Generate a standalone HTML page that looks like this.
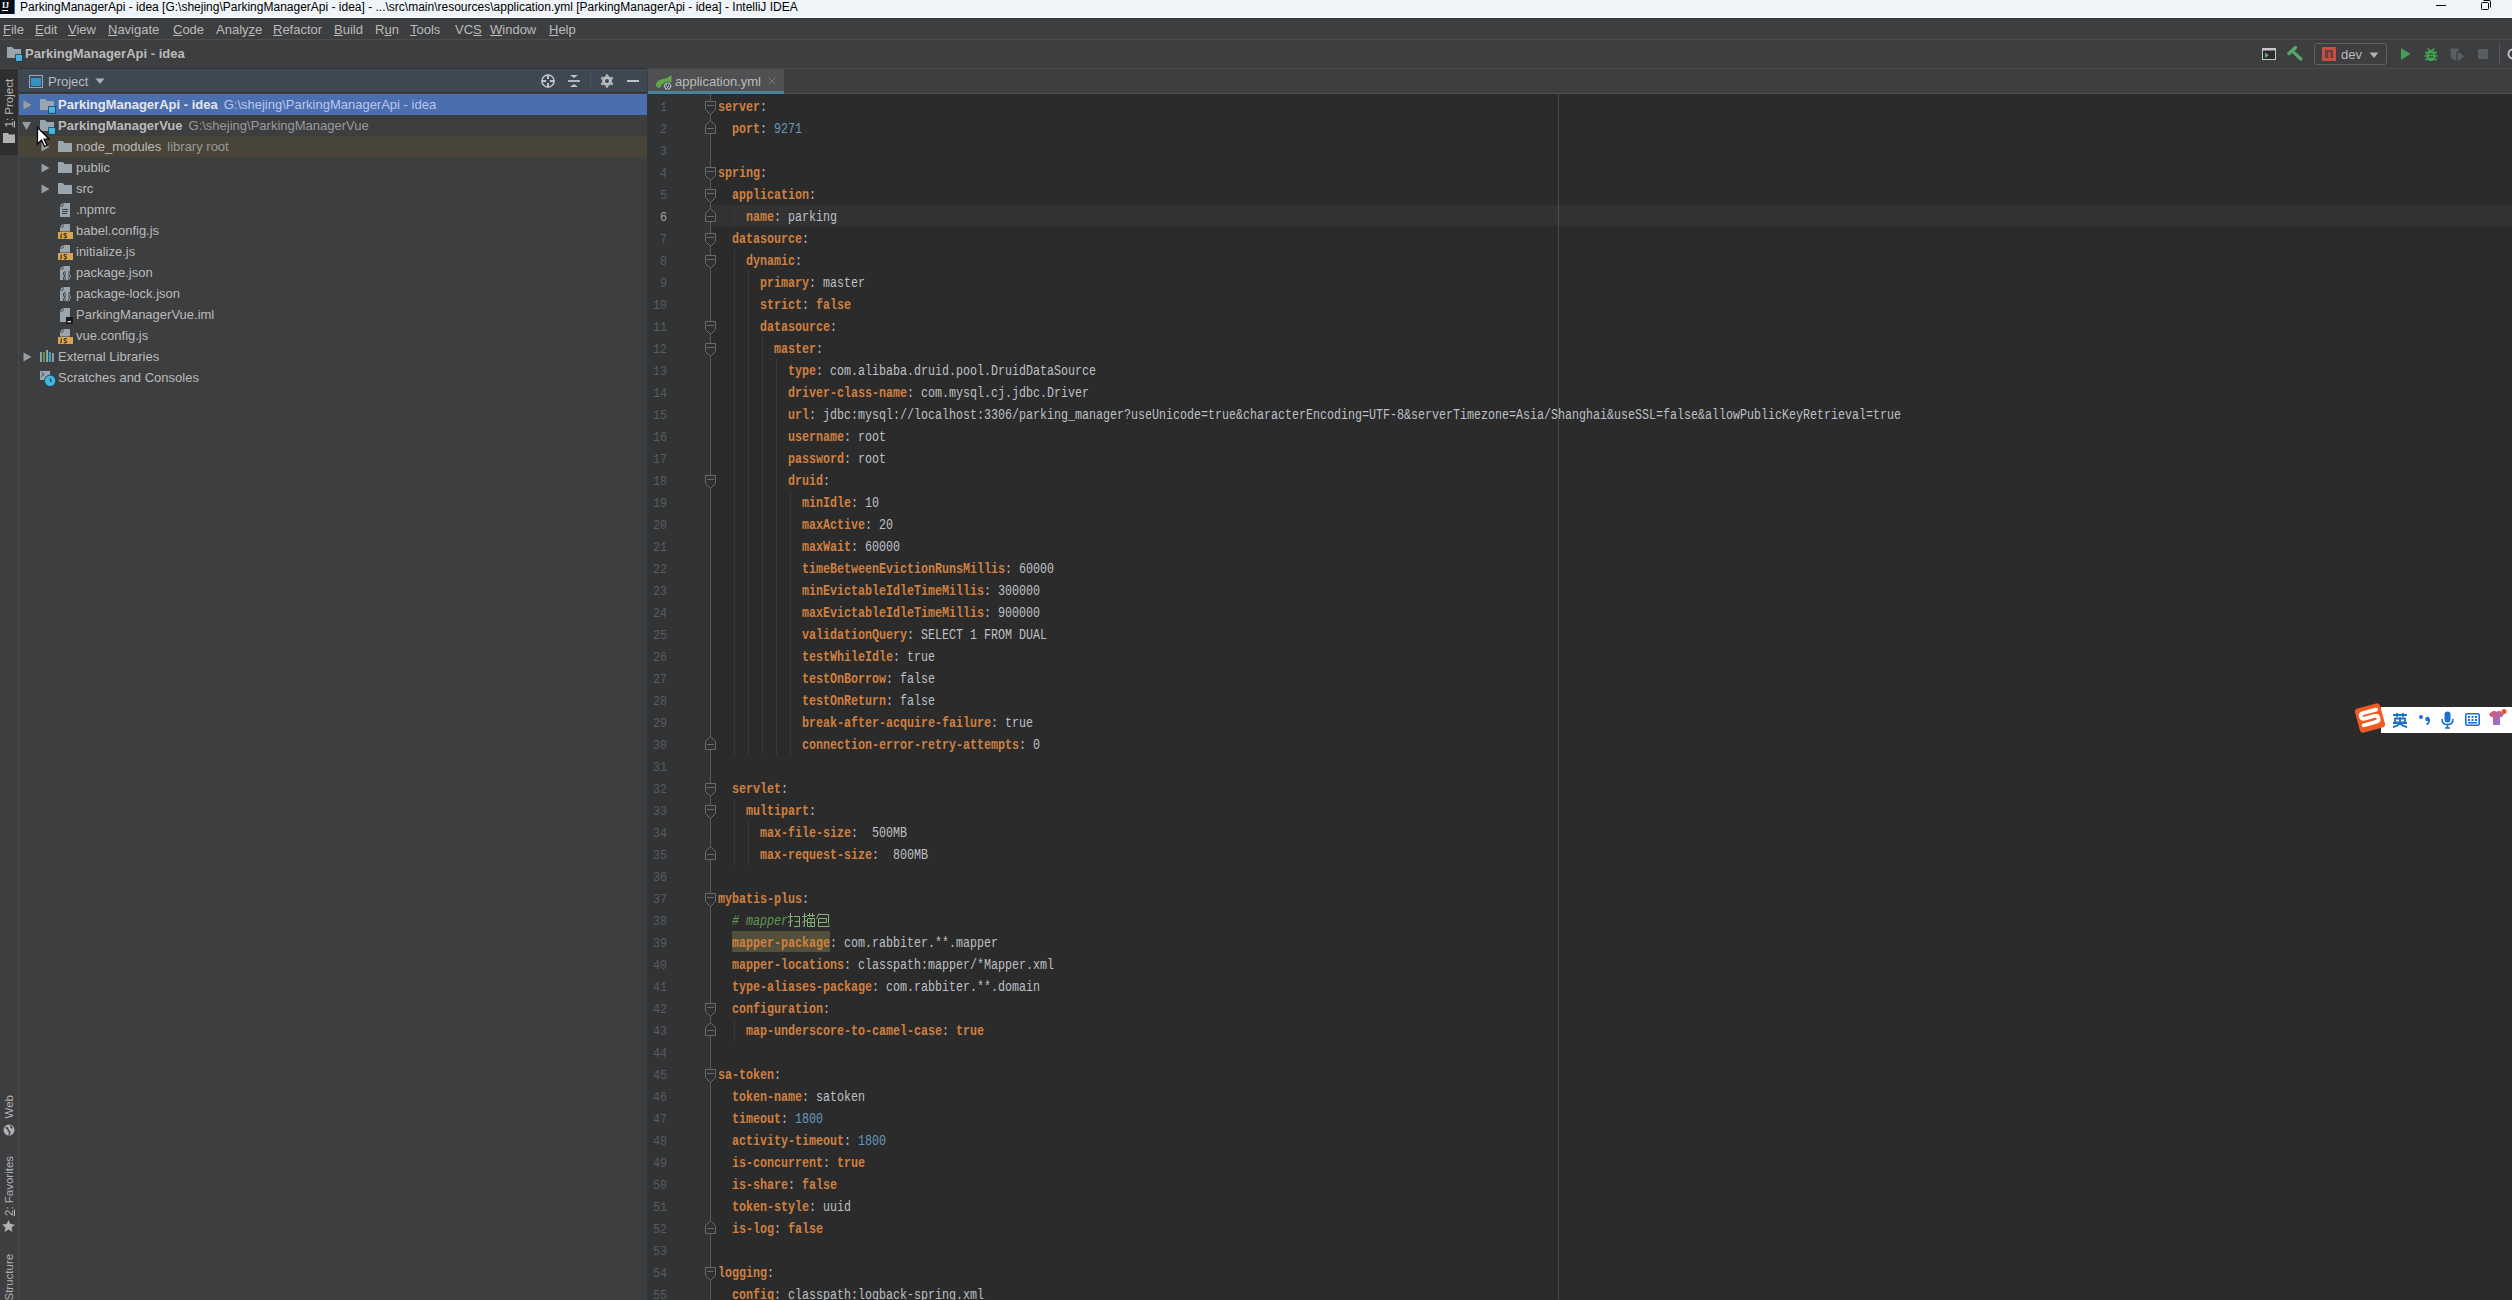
<!DOCTYPE html><html><head><meta charset="utf-8"><title>IntelliJ IDEA</title><style>
*{margin:0;padding:0;box-sizing:border-box}
html,body{width:2512px;height:1300px;overflow:hidden;background:#3d3e40;font-family:"Liberation Sans",sans-serif}
.a{position:absolute}
#title{position:absolute;left:0;top:0;width:2512px;height:18px;background:#eff4f9;border-bottom:1px solid #ffffff}
#title .t{position:absolute;left:20px;top:-1px;line-height:16px;font-size:12px;color:#000}
#menubar{position:absolute;left:0;top:18px;width:2512px;height:22px;background:#3d3e40;border-top:1px solid #313234;border-bottom:1px solid #4b4d4f}
.mi{position:absolute;top:2px;font-size:13px;line-height:17px;color:#bbbbbb}
.mi u{text-decoration:underline;text-underline-offset:1px}
#navbar{position:absolute;left:0;top:40px;width:2512px;height:29px;background:#3d3e40;border-bottom:1px solid #47494b}
#strip{position:absolute;left:0;top:69px;width:18px;height:1231px;background:#3d3e40}
#panel{position:absolute;left:19px;top:69px;width:628px;height:1231px;background:#3d3e40}
#phead{position:absolute;left:19px;top:68px;width:628px;height:25px;background:#3d4853;border-top:1px solid #2f3336;border-bottom:1px solid #2b3138}
.tr{position:absolute;left:19px;width:628px;height:21px}
.tr.sel{background:#4b6eaf}
.tr.lib{background:#484438}
.ar{position:absolute}
.ti{position:absolute;width:18px;height:18px}
.ti svg{display:block}
.tt{position:absolute;font-size:13px;line-height:21px;color:#bbbbbb;white-space:pre}
.tt b{font-weight:bold}
.tt .ex{color:#9a9a9a;margin-left:6px}
.tt.s{color:#e6e6e6}
.tt.s .ex{color:#b9c6ea}
#tabbar{position:absolute;left:647px;top:69px;width:1865px;height:25px;background:#3d3e40;border-bottom:1px solid #515151}
#tab{position:absolute;left:648px;top:69px;width:136px;height:25px;background:#4e5052;border-bottom:3px solid #4c8295}
#editor{position:absolute;left:647px;top:94px;width:1865px;height:1206px;background:#2b2b2b}
#gutter{position:absolute;left:647px;top:94px;width:63px;height:1206px;background:#313335}
.ln{position:absolute;left:627px;width:40px;text-align:right;font-family:"Liberation Mono",monospace;font-size:13px;line-height:22px;color:#595c5f;transform:scaleX(0.897);transform-origin:100% 0}
.cl{position:absolute;font-family:"Liberation Mono",monospace;font-size:14px;line-height:22px;white-space:pre;color:#bcc0c6;transform:scaleX(0.8332);transform-origin:0 0}
.cl .k,.cl .b,.cl .hl{color:#cf8040;font-weight:bold}
.cl .hl{}
#hlbox{position:absolute;left:732px;top:931px;width:98px;height:21px;background:#52503a}
.cl .n{color:#6897bb}
.cl .c{color:#629755;font-style:italic}
.ig{position:absolute;width:1px;background:#393939}
#curline{position:absolute;left:711px;top:205px;width:1801px;height:21px;background:#323232}
#margin{position:absolute;left:1558px;top:94px;width:1px;height:1206px;background:#4b4b4b}
</style></head><body>
<div id="title"><svg class="a" style="left:0;top:0" width="15" height="14" viewBox="0 0 15 14"><rect width="15" height="14" fill="#0a0d14"/><rect x="14" y="0" width="1" height="14" fill="#1b6fb8"/><text x="2" y="8" font-family="Liberation Serif" font-weight="bold" font-size="8" fill="#fff">IJ</text><rect x="2" y="10" width="6" height="1" fill="#fff"/></svg>
<div class="t">ParkingManagerApi - idea [G:\shejing\ParkingManagerApi - idea] - ...\src\main\resources\application.yml [ParkingManagerApi - idea] - IntelliJ IDEA</div>
<div class="a" style="left:2436px;top:5px;width:10px;height:1px;background:#000"></div>
<svg class="a" style="left:2480px;top:-1px" width="12" height="11" viewBox="0 0 12 11"><rect x="1.5" y="3.5" width="7" height="7" rx="1" fill="none" stroke="#000"/><path d="M3.5 1.5H9.5Q10.5 1.5 10.5 2.5V8.5" fill="none" stroke="#000"/></svg>
</div>
<div id="menubar"><div class="mi" style="left:3px"><u>F</u>ile</div>
<div class="mi" style="left:35px"><u>E</u>dit</div>
<div class="mi" style="left:68px"><u>V</u>iew</div>
<div class="mi" style="left:108px"><u>N</u>avigate</div>
<div class="mi" style="left:173px"><u>C</u>ode</div>
<div class="mi" style="left:216px">Analy<u>z</u>e</div>
<div class="mi" style="left:273px"><u>R</u>efactor</div>
<div class="mi" style="left:334px"><u>B</u>uild</div>
<div class="mi" style="left:375px">R<u>u</u>n</div>
<div class="mi" style="left:410px"><u>T</u>ools</div>
<div class="mi" style="left:455px">VC<u>S</u></div>
<div class="mi" style="left:490px"><u>W</u>indow</div>
<div class="mi" style="left:549px"><u>H</u>elp</div></div>
<div id="navbar"></div>
<div class="ti" style="left:7px;top:44px"><svg width="18" height="18" viewBox="0 0 18 18"><path d="M0 3H5L7 5H14V14H0Z" fill="#9aa5ad"/><rect x="8.2" y="10.1" width="7.6" height="7.6" fill="#2a3b45"/><rect x="9" y="10.9" width="6" height="6" fill="#40b6e0"/></svg></div>
<div class="tt" style="left:25px;top:43px;color:#bbbbbb"><b>ParkingManagerApi - idea</b></div>

<svg class="a" style="left:2262px;top:48px" width="14" height="12" viewBox="0 0 14 12"><rect x="0.5" y="0.5" width="13" height="11" fill="#2b2b2b" stroke="#c4c6c8"/><rect x="0" y="0" width="14" height="2.5" fill="#c4c6c8"/><path d="M3 4.5l4 2.8-4 2.8z" fill="#59a869"/></svg>
<svg class="a" style="left:2286px;top:46px" width="17" height="15" viewBox="0 0 17 15"><path d="M3 7.5L9.5 1.5" stroke="#59a869" stroke-width="3.4" stroke-linecap="round"/><path d="M6.2 4.8L14.8 13" stroke="#59a869" stroke-width="3.2" stroke-linecap="round"/></svg>
<div class="a" style="left:2314px;top:43px;width:73px;height:22px;border:1px solid #5e6060;border-radius:3px"></div>
<svg class="a" style="left:2322px;top:47px" width="14" height="14" viewBox="0 0 14 14"><rect width="14" height="14" fill="#c94e3f"/><path d="M3 11V3H11V11H8.5V5.3H6.2V11Z" fill="#3d3e40" fill-opacity=".75"/></svg>
<div class="a" style="left:2341px;top:45px;font-size:13px;line-height:19px;color:#bbbbbb">dev</div>
<svg class="a" style="left:2369px;top:52px" width="10" height="7" viewBox="0 0 10 7"><path d="M0.5 0.5H9.5L5 6Z" fill="#afb1b3"/></svg>
<svg class="a" style="left:2400px;top:47px" width="12" height="14" viewBox="0 0 12 14"><path d="M1 1L10.5 7L1 13Z" fill="#499c54"/></svg>
<svg class="a" style="left:2424px;top:47px" width="14" height="15" viewBox="0 0 14 15"><ellipse cx="7" cy="8.5" rx="4.6" ry="5.8" fill="#499c54"/><path d="M1 5.5h12M0.5 9h13M1 12.5h12M4 1.5l1.5 2M10 1.5l-1.5 2" stroke="#499c54" stroke-width="1.5"/><path d="M4.8 7.2h4.4M4.8 10h4.4" stroke="#1e5c2a" stroke-width="1.3"/></svg>
<svg class="a" style="left:2450px;top:48px" width="15" height="13" viewBox="0 0 15 13"><path d="M0.5 0.5h8v3H6.3v9.5Q0.5 11 0.5 7z" fill="#5a5d60"/><path d="M7.5 4.5h2l4.5 4-4.5 4h-2z" fill="#5a5d60"/></svg>
<div class="a" style="left:2478px;top:49px;width:10px;height:10px;background:#5a5d60"></div>
<div class="a" style="left:2499px;top:44px;width:1px;height:20px;background:#55585a"></div>
<svg class="a" style="left:2506px;top:48px" width="6" height="13" viewBox="0 0 6 13"><circle cx="7" cy="6" r="4.6" fill="none" stroke="#c4c6c8" stroke-width="1.8"/></svg>

<div id="strip"></div>
<div class="a" style="left:0;top:69px;width:18px;height:86px;background:#2d2f31"></div>
<div class="a" style="left:0;top:0;height:14px;font-size:11.5px;line-height:14px;color:#bbbbbb;white-space:nowrap;transform-origin:0 0;transform:translate(2px,127.5px) rotate(-90deg)"><u>1</u>: Project</div>
<svg class="a" style="left:3px;top:133px" width="12" height="10" viewBox="0 0 12 10"><path d="M0 0h5l1 1.5h6V10H0z" fill="#afb1b3"/></svg>
<div class="a" style="left:0;top:0;height:14px;font-size:11.5px;line-height:14px;color:#afb1b3;white-space:nowrap;transform-origin:0 0;transform:translate(2px,1118.5px) rotate(-90deg)">Web</div>
<svg class="a" style="left:3px;top:1124px" width="12" height="12" viewBox="0 0 12 12"><circle cx="6" cy="6" r="5.5" fill="#afb1b3"/><path d="M2.5 3.5q2 0 2.5 2t2 2.5q-.8 1.6-1 3M7.5 1.5q0 2 2 2.5" stroke="#3d3e40" fill="none" stroke-width="1.3"/></svg>
<div class="a" style="left:0;top:0;height:14px;font-size:11.5px;line-height:14px;color:#afb1b3;white-space:nowrap;transform-origin:0 0;transform:translate(2px,1216px) rotate(-90deg)"><u>2</u>: Favorites</div>
<svg class="a" style="left:2px;top:1220px" width="13" height="12" viewBox="0 0 13 12"><path d="M6.5 0l1.9 4 4.6.5-3.5 3 1 4.5-4-2.4-4 2.4 1-4.5L0 4.5 4.6 4z" fill="#afb1b3"/></svg>
<div class="a" style="left:0;top:0;height:14px;font-size:11.5px;line-height:14px;color:#afb1b3;white-space:nowrap;transform-origin:0 0;transform:translate(2px,1300.5px) rotate(-90deg)">Structure</div>
<div class="a" style="left:18px;top:69px;width:1px;height:1231px;background:#47494b"></div>
<div id="panel"></div>
<div id="phead"></div>

<svg class="a" style="left:29px;top:75px" width="14" height="14" viewBox="0 0 14 14"><rect x="0.5" y="0.5" width="13" height="12" fill="none" stroke="#9aa7b0"/><rect x="2" y="3" width="10" height="8" fill="#3592c4"/></svg>
<div class="a" style="left:48px;top:73px;font-size:13px;line-height:18px;color:#bbbbbb">Project</div>
<svg class="a" style="left:95px;top:78px" width="10" height="7" viewBox="0 0 10 7"><path d="M0.5 0.5H9.5L5 6Z" fill="#afb1b3"/></svg>
<svg class="a" style="left:540px;top:73px" width="16" height="16" viewBox="0 0 16 16"><circle cx="8" cy="8" r="6.1" fill="none" stroke="#c0c3c6" stroke-width="1.5"/><path d="M8 1.5v4.6M8 9.9v4.6M1.5 8h4.6M9.9 8h4.6" stroke="#c0c3c6" stroke-width="2"/></svg>
<svg class="a" style="left:567px;top:74px" width="14" height="14" viewBox="0 0 14 14"><path d="M1 7h12" stroke="#c0c3c6" stroke-width="1.8"/><path d="M3 1h8L7 4z M3 13h8L7 10z" fill="#c0c3c6"/></svg>
<div class="a" style="left:590px;top:72px;width:1px;height:18px;background:#4a5560"></div>
<svg class="a" style="left:600px;top:74px" width="14" height="14" viewBox="0 0 14 14"><circle cx="7" cy="7" r="4.9" fill="#c0c3c6"/><rect x="5.7" y="0.3" width="2.6" height="4" rx=".6" fill="#afb1b3" transform="rotate(0 7 7)"/><rect x="5.7" y="0.3" width="2.6" height="4" rx=".6" fill="#afb1b3" transform="rotate(60 7 7)"/><rect x="5.7" y="0.3" width="2.6" height="4" rx=".6" fill="#afb1b3" transform="rotate(120 7 7)"/><rect x="5.7" y="0.3" width="2.6" height="4" rx=".6" fill="#afb1b3" transform="rotate(180 7 7)"/><rect x="5.7" y="0.3" width="2.6" height="4" rx=".6" fill="#afb1b3" transform="rotate(240 7 7)"/><rect x="5.7" y="0.3" width="2.6" height="4" rx=".6" fill="#afb1b3" transform="rotate(300 7 7)"/><circle cx="7" cy="7" r="2" fill="#3d4853"/></svg>
<div class="a" style="left:627px;top:80px;width:12px;height:2px;background:#c0c3c6"></div>

<div class="tr sel" style="top:94px"></div>
<svg class="ar" style="left:23px;top:100px" width="10" height="11" viewBox="0 0 10 11"><path d="M0.5 0.5L8.5 5L0.5 9.5Z" fill="#9a9da0"/></svg>
<div class="ti" style="left:40px;top:96px"><svg width="18" height="18" viewBox="0 0 18 18"><path d="M0 3H5L7 5H14V14H0Z" fill="#9aa5ad"/><rect x="8.2" y="10.1" width="7.6" height="7.6" fill="#1d4656"/><rect x="9" y="10.9" width="6" height="6" fill="#40b6e0"/></svg></div>
<div class="tt s" style="left:58px;top:94px"><b>ParkingManagerApi - idea</b><span class="ex">G:\shejing\ParkingManagerApi - idea</span></div>
<div class="tr" style="top:115px"></div>
<svg class="ar" style="left:22px;top:122px" width="10" height="9" viewBox="0 0 10 9"><path d="M0 0H9L4.5 8Z" fill="#9a9da0"/></svg>
<div class="ti" style="left:40px;top:117px"><svg width="18" height="18" viewBox="0 0 18 18"><path d="M0 3H5L7 5H14V14H0Z" fill="#9aa5ad"/><rect x="8.2" y="10.1" width="7.6" height="7.6" fill="#1d4656"/><rect x="9" y="10.9" width="6" height="6" fill="#40b6e0"/></svg></div>
<div class="tt" style="left:58px;top:115px"><b>ParkingManagerVue</b><span class="ex">G:\shejing\ParkingManagerVue</span></div>
<div class="tr lib" style="top:136px"></div>
<svg class="ar" style="left:41px;top:142px" width="10" height="11" viewBox="0 0 10 11"><path d="M0.5 0.5L8.5 5L0.5 9.5Z" fill="#9a9da0"/></svg>
<div class="ti" style="left:58px;top:138px"><svg width="18" height="18" viewBox="0 0 18 18"><path d="M0 3H4.7L6.7 5H14V14H0Z" fill="#9aa5ad"/></svg></div>
<div class="tt" style="left:76px;top:136px">node_modules<span class="ex">library root</span></div>
<div class="tr" style="top:157px"></div>
<svg class="ar" style="left:41px;top:163px" width="10" height="11" viewBox="0 0 10 11"><path d="M0.5 0.5L8.5 5L0.5 9.5Z" fill="#9a9da0"/></svg>
<div class="ti" style="left:58px;top:159px"><svg width="18" height="18" viewBox="0 0 18 18"><path d="M0 3H4.7L6.7 5H14V14H0Z" fill="#9aa5ad"/></svg></div>
<div class="tt" style="left:76px;top:157px">public</div>
<div class="tr" style="top:178px"></div>
<svg class="ar" style="left:41px;top:184px" width="10" height="11" viewBox="0 0 10 11"><path d="M0.5 0.5L8.5 5L0.5 9.5Z" fill="#9a9da0"/></svg>
<div class="ti" style="left:58px;top:180px"><svg width="18" height="18" viewBox="0 0 18 18"><path d="M0 3H4.7L6.7 5H14V14H0Z" fill="#9aa5ad"/></svg></div>
<div class="tt" style="left:76px;top:178px">src</div>
<div class="tr" style="top:199px"></div>
<div class="ti" style="left:58px;top:201px"><svg width="18" height="18" viewBox="0 0 18 18"><path d="M5 2H12V16H2V5Z" fill="#9aa5ad"/><path d="M2 5L5 2V5Z" fill="#c5ccd2"/><path d="M2 5H5V2" fill="none" stroke="#2f3133" stroke-width=".8"/><path d="M4 8.5H10M4 10.5H10M4 12.5H9" stroke="#3d3e40" stroke-width="1"/></svg></div>
<div class="tt" style="left:76px;top:199px">.npmrc</div>
<div class="tr" style="top:220px"></div>
<div class="ti" style="left:58px;top:222px"><svg width="18" height="18" viewBox="0 0 18 18"><path d="M5 2H12V9.5H2V5Z" fill="#9aa5ad"/><path d="M2 5L5 2V5Z" fill="#c5ccd2"/><path d="M2 5H5V2" fill="none" stroke="#2f3133" stroke-width=".8"/><rect x="0" y="10" width="15" height="7" fill="#d9a54e"/><path d="M3.2 11.5V14.8Q3.2 16 2 15.8M8.6 12Q8 11.4 7 11.5Q5.8 11.7 6 12.7Q6.2 13.4 7.3 13.6Q8.6 13.9 8.5 14.9Q8.3 16 7 15.9Q6.2 15.8 5.8 15.3" fill="none" stroke="#3a2e1c" stroke-width="1.1"/></svg></div>
<div class="tt" style="left:76px;top:220px">babel.config.js</div>
<div class="tr" style="top:241px"></div>
<div class="ti" style="left:58px;top:243px"><svg width="18" height="18" viewBox="0 0 18 18"><path d="M5 2H12V9.5H2V5Z" fill="#9aa5ad"/><path d="M2 5L5 2V5Z" fill="#c5ccd2"/><path d="M2 5H5V2" fill="none" stroke="#2f3133" stroke-width=".8"/><rect x="0" y="10" width="15" height="7" fill="#d9a54e"/><path d="M3.2 11.5V14.8Q3.2 16 2 15.8M8.6 12Q8 11.4 7 11.5Q5.8 11.7 6 12.7Q6.2 13.4 7.3 13.6Q8.6 13.9 8.5 14.9Q8.3 16 7 15.9Q6.2 15.8 5.8 15.3" fill="none" stroke="#3a2e1c" stroke-width="1.1"/></svg></div>
<div class="tt" style="left:76px;top:241px">initialize.js</div>
<div class="tr" style="top:262px"></div>
<div class="ti" style="left:58px;top:264px"><svg width="18" height="18" viewBox="0 0 18 18"><path d="M5 2H12V16H2V5Z" fill="#9aa5ad"/><path d="M2 5L5 2V5Z" fill="#c5ccd2"/><path d="M2 5H5V2" fill="none" stroke="#2f3133" stroke-width=".8"/><path d="M7.5 8.5Q6 8.5 6.2 10.3T5 12.2Q6.2 12.2 6.2 14T7.5 16.2M10.5 8.5Q12 8.5 11.8 10.3T13 12.2Q11.8 12.2 11.8 14T10.5 16.2" fill="none" stroke="#2f3133" stroke-width="2.6"/><path d="M7.5 8.5Q6 8.5 6.2 10.3T5 12.2Q6.2 12.2 6.2 14T7.5 16.2M10.5 8.5Q12 8.5 11.8 10.3T13 12.2Q11.8 12.2 11.8 14T10.5 16.2M9 10.5V14" fill="none" stroke="#9aa5ad" stroke-width="1"/></svg></div>
<div class="tt" style="left:76px;top:262px">package.json</div>
<div class="tr" style="top:283px"></div>
<div class="ti" style="left:58px;top:285px"><svg width="18" height="18" viewBox="0 0 18 18"><path d="M5 2H12V16H2V5Z" fill="#9aa5ad"/><path d="M2 5L5 2V5Z" fill="#c5ccd2"/><path d="M2 5H5V2" fill="none" stroke="#2f3133" stroke-width=".8"/><path d="M7.5 8.5Q6 8.5 6.2 10.3T5 12.2Q6.2 12.2 6.2 14T7.5 16.2M10.5 8.5Q12 8.5 11.8 10.3T13 12.2Q11.8 12.2 11.8 14T10.5 16.2" fill="none" stroke="#2f3133" stroke-width="2.6"/><path d="M7.5 8.5Q6 8.5 6.2 10.3T5 12.2Q6.2 12.2 6.2 14T7.5 16.2M10.5 8.5Q12 8.5 11.8 10.3T13 12.2Q11.8 12.2 11.8 14T10.5 16.2M9 10.5V14" fill="none" stroke="#9aa5ad" stroke-width="1"/></svg></div>
<div class="tt" style="left:76px;top:283px">package-lock.json</div>
<div class="tr" style="top:304px"></div>
<div class="ti" style="left:58px;top:306px"><svg width="18" height="18" viewBox="0 0 18 18"><path d="M5 2H12V16H2V5Z" fill="#9aa5ad"/><path d="M2 5L5 2V5Z" fill="#c5ccd2"/><path d="M2 5H5V2" fill="none" stroke="#2f3133" stroke-width=".8"/><rect x="8" y="11" width="7" height="7" fill="#1a1a1a"/><rect x="9.5" y="15" width="3.5" height="1.3" fill="#e0e0e0"/></svg></div>
<div class="tt" style="left:76px;top:304px">ParkingManagerVue.iml</div>
<div class="tr" style="top:325px"></div>
<div class="ti" style="left:58px;top:327px"><svg width="18" height="18" viewBox="0 0 18 18"><path d="M5 2H12V9.5H2V5Z" fill="#9aa5ad"/><path d="M2 5L5 2V5Z" fill="#c5ccd2"/><path d="M2 5H5V2" fill="none" stroke="#2f3133" stroke-width=".8"/><rect x="0" y="10" width="15" height="7" fill="#d9a54e"/><path d="M3.2 11.5V14.8Q3.2 16 2 15.8M8.6 12Q8 11.4 7 11.5Q5.8 11.7 6 12.7Q6.2 13.4 7.3 13.6Q8.6 13.9 8.5 14.9Q8.3 16 7 15.9Q6.2 15.8 5.8 15.3" fill="none" stroke="#3a2e1c" stroke-width="1.1"/></svg></div>
<div class="tt" style="left:76px;top:325px">vue.config.js</div>
<div class="tr" style="top:346px"></div>
<svg class="ar" style="left:23px;top:352px" width="10" height="11" viewBox="0 0 10 11"><path d="M0.5 0.5L8.5 5L0.5 9.5Z" fill="#9a9da0"/></svg>
<div class="ti" style="left:40px;top:348px"><svg width="18" height="18" viewBox="0 0 18 18"><rect x="0" y="4" width="1.8" height="10" fill="#9aa5ad"/><rect x="2.8" y="4" width="2.2" height="10" fill="#62b543" fill-opacity=".75"/><rect x="6.1" y="2" width="2" height="12" fill="#9aa5ad"/><rect x="8.9" y="4" width="2.1" height="10" fill="#40b6e0" fill-opacity=".85"/><rect x="12" y="5" width="1.8" height="9" fill="#9aa5ad"/></svg></div>
<div class="tt" style="left:58px;top:346px">External Libraries</div>
<div class="tr" style="top:367px"></div>
<div class="ti" style="left:40px;top:369px"><svg width="18" height="18" viewBox="0 0 18 18"><rect x="0" y="2" width="10" height="9" fill="#9aa5ad"/><path d="M1.5 3.5L4 5.5L1.5 7.5" stroke="#3d3e40" fill="none" stroke-width="1"/><circle cx="10.1" cy="11.8" r="6" fill="#1d4656"/><circle cx="10.1" cy="11.8" r="5.2" fill="#40b6e0"/><path d="M10 9.5L11.3 13" stroke="#1d4656" stroke-width="1.4"/></svg></div>
<div class="tt" style="left:58px;top:367px">Scratches and Consoles</div>
<div id="editor"></div>
<div id="gutter"></div>
<div id="curline"></div>
<div id="margin"></div>
<div id="hlbox"></div>
<div class="ig" style="left:734px;top:205px;height:22px"></div>
<div class="ig" style="left:734px;top:249px;height:506px"></div>
<div class="ig" style="left:748px;top:271px;height:484px"></div>
<div class="ig" style="left:762px;top:337px;height:418px"></div>
<div class="ig" style="left:776px;top:359px;height:396px"></div>
<div class="ig" style="left:790px;top:491px;height:264px"></div>
<div class="ig" style="left:734px;top:799px;height:66px"></div>
<div class="ig" style="left:748px;top:821px;height:44px"></div>
<div class="ig" style="left:734px;top:1019px;height:22px"></div>
<svg class="fold" width="20" height="1206" viewBox="0 0 20 1206" style="position:absolute;left:700px;top:94px">
<line x1="10.5" y1="0" x2="10.5" y2="1206" stroke="#5a5a5a" stroke-width="1"/>
<path d="M5.5 7.5 H15.5 V15.5 L10.5 20.5 L5.5 15.5 Z" fill="#2f3032" stroke="#6a6a6a"/>
<line x1="7" y1="11.5" x2="14" y2="11.5" stroke="#6a6a6a"/>
<path d="M5.5 73.5 H15.5 V81.5 L10.5 86.5 L5.5 81.5 Z" fill="#2f3032" stroke="#6a6a6a"/>
<line x1="7" y1="77.5" x2="14" y2="77.5" stroke="#6a6a6a"/>
<path d="M5.5 95.5 H15.5 V103.5 L10.5 108.5 L5.5 103.5 Z" fill="#2f3032" stroke="#6a6a6a"/>
<line x1="7" y1="99.5" x2="14" y2="99.5" stroke="#6a6a6a"/>
<path d="M5.5 139.5 H15.5 V147.5 L10.5 152.5 L5.5 147.5 Z" fill="#2f3032" stroke="#6a6a6a"/>
<line x1="7" y1="143.5" x2="14" y2="143.5" stroke="#6a6a6a"/>
<path d="M5.5 161.5 H15.5 V169.5 L10.5 174.5 L5.5 169.5 Z" fill="#2f3032" stroke="#6a6a6a"/>
<line x1="7" y1="165.5" x2="14" y2="165.5" stroke="#6a6a6a"/>
<path d="M5.5 227.5 H15.5 V235.5 L10.5 240.5 L5.5 235.5 Z" fill="#2f3032" stroke="#6a6a6a"/>
<line x1="7" y1="231.5" x2="14" y2="231.5" stroke="#6a6a6a"/>
<path d="M5.5 249.5 H15.5 V257.5 L10.5 262.5 L5.5 257.5 Z" fill="#2f3032" stroke="#6a6a6a"/>
<line x1="7" y1="253.5" x2="14" y2="253.5" stroke="#6a6a6a"/>
<path d="M5.5 381.5 H15.5 V389.5 L10.5 394.5 L5.5 389.5 Z" fill="#2f3032" stroke="#6a6a6a"/>
<line x1="7" y1="385.5" x2="14" y2="385.5" stroke="#6a6a6a"/>
<path d="M5.5 689.5 H15.5 V697.5 L10.5 702.5 L5.5 697.5 Z" fill="#2f3032" stroke="#6a6a6a"/>
<line x1="7" y1="693.5" x2="14" y2="693.5" stroke="#6a6a6a"/>
<path d="M5.5 711.5 H15.5 V719.5 L10.5 724.5 L5.5 719.5 Z" fill="#2f3032" stroke="#6a6a6a"/>
<line x1="7" y1="715.5" x2="14" y2="715.5" stroke="#6a6a6a"/>
<path d="M5.5 799.5 H15.5 V807.5 L10.5 812.5 L5.5 807.5 Z" fill="#2f3032" stroke="#6a6a6a"/>
<line x1="7" y1="803.5" x2="14" y2="803.5" stroke="#6a6a6a"/>
<path d="M5.5 909.5 H15.5 V917.5 L10.5 922.5 L5.5 917.5 Z" fill="#2f3032" stroke="#6a6a6a"/>
<line x1="7" y1="913.5" x2="14" y2="913.5" stroke="#6a6a6a"/>
<path d="M5.5 975.5 H15.5 V983.5 L10.5 988.5 L5.5 983.5 Z" fill="#2f3032" stroke="#6a6a6a"/>
<line x1="7" y1="979.5" x2="14" y2="979.5" stroke="#6a6a6a"/>
<path d="M5.5 1173.5 H15.5 V1181.5 L10.5 1186.5 L5.5 1181.5 Z" fill="#2f3032" stroke="#6a6a6a"/>
<line x1="7" y1="1177.5" x2="14" y2="1177.5" stroke="#6a6a6a"/>
<path d="M5.5 39.5 H15.5 V31.5 L10.5 26.5 L5.5 31.5 Z" fill="#2f3032" stroke="#6a6a6a"/>
<line x1="7" y1="34.5" x2="14" y2="34.5" stroke="#6a6a6a"/>
<path d="M5.5 127.5 H15.5 V119.5 L10.5 114.5 L5.5 119.5 Z" fill="#2f3032" stroke="#6a6a6a"/>
<line x1="7" y1="122.5" x2="14" y2="122.5" stroke="#6a6a6a"/>
<path d="M5.5 655.5 H15.5 V647.5 L10.5 642.5 L5.5 647.5 Z" fill="#2f3032" stroke="#6a6a6a"/>
<line x1="7" y1="650.5" x2="14" y2="650.5" stroke="#6a6a6a"/>
<path d="M5.5 765.5 H15.5 V757.5 L10.5 752.5 L5.5 757.5 Z" fill="#2f3032" stroke="#6a6a6a"/>
<line x1="7" y1="760.5" x2="14" y2="760.5" stroke="#6a6a6a"/>
<path d="M5.5 941.5 H15.5 V933.5 L10.5 928.5 L5.5 933.5 Z" fill="#2f3032" stroke="#6a6a6a"/>
<line x1="7" y1="936.5" x2="14" y2="936.5" stroke="#6a6a6a"/>
<path d="M5.5 1139.5 H15.5 V1131.5 L10.5 1126.5 L5.5 1131.5 Z" fill="#2f3032" stroke="#6a6a6a"/>
<line x1="7" y1="1134.5" x2="14" y2="1134.5" stroke="#6a6a6a"/>
</svg>
<div class="ln" style="top:97px">1</div>
<div class="cl" style="top:96px;left:718px"><span class="k">server</span><span class="p">:</span></div>
<div class="ln" style="top:119px">2</div>
<div class="cl" style="top:118px;left:732px"><span class="k">port</span><span class="p">: </span><span class="n">9271</span></div>
<div class="ln" style="top:141px">3</div>
<div class="ln" style="top:163px">4</div>
<div class="cl" style="top:162px;left:718px"><span class="k">spring</span><span class="p">:</span></div>
<div class="ln" style="top:185px">5</div>
<div class="cl" style="top:184px;left:732px"><span class="k">application</span><span class="p">:</span></div>
<div class="ln" style="top:207px;color:#a4a3a3">6</div>
<div class="cl" style="top:206px;left:746px"><span class="k">name</span><span class="p">: </span><span class="v">parking</span></div>
<div class="ln" style="top:229px">7</div>
<div class="cl" style="top:228px;left:732px"><span class="k">datasource</span><span class="p">:</span></div>
<div class="ln" style="top:251px">8</div>
<div class="cl" style="top:250px;left:746px"><span class="k">dynamic</span><span class="p">:</span></div>
<div class="ln" style="top:273px">9</div>
<div class="cl" style="top:272px;left:760px"><span class="k">primary</span><span class="p">: </span><span class="v">master</span></div>
<div class="ln" style="top:295px">10</div>
<div class="cl" style="top:294px;left:760px"><span class="k">strict</span><span class="p">: </span><span class="b">false</span></div>
<div class="ln" style="top:317px">11</div>
<div class="cl" style="top:316px;left:760px"><span class="k">datasource</span><span class="p">:</span></div>
<div class="ln" style="top:339px">12</div>
<div class="cl" style="top:338px;left:774px"><span class="k">master</span><span class="p">:</span></div>
<div class="ln" style="top:361px">13</div>
<div class="cl" style="top:360px;left:788px"><span class="k">type</span><span class="p">: </span><span class="v">com.alibaba.druid.pool.DruidDataSource</span></div>
<div class="ln" style="top:383px">14</div>
<div class="cl" style="top:382px;left:788px"><span class="k">driver-class-name</span><span class="p">: </span><span class="v">com.mysql.cj.jdbc.Driver</span></div>
<div class="ln" style="top:405px">15</div>
<div class="cl" style="top:404px;left:788px"><span class="k">url</span><span class="p">: </span><span class="v">jdbc:mysql://localhost:3306/parking_manager?useUnicode=true&amp;characterEncoding=UTF-8&amp;serverTimezone=Asia/Shanghai&amp;useSSL=false&amp;allowPublicKeyRetrieval=true</span></div>
<div class="ln" style="top:427px">16</div>
<div class="cl" style="top:426px;left:788px"><span class="k">username</span><span class="p">: </span><span class="v">root</span></div>
<div class="ln" style="top:449px">17</div>
<div class="cl" style="top:448px;left:788px"><span class="k">password</span><span class="p">: </span><span class="v">root</span></div>
<div class="ln" style="top:471px">18</div>
<div class="cl" style="top:470px;left:788px"><span class="k">druid</span><span class="p">:</span></div>
<div class="ln" style="top:493px">19</div>
<div class="cl" style="top:492px;left:802px"><span class="k">minIdle</span><span class="p">: </span><span class="v">10</span></div>
<div class="ln" style="top:515px">20</div>
<div class="cl" style="top:514px;left:802px"><span class="k">maxActive</span><span class="p">: </span><span class="v">20</span></div>
<div class="ln" style="top:537px">21</div>
<div class="cl" style="top:536px;left:802px"><span class="k">maxWait</span><span class="p">: </span><span class="v">60000</span></div>
<div class="ln" style="top:559px">22</div>
<div class="cl" style="top:558px;left:802px"><span class="k">timeBetweenEvictionRunsMillis</span><span class="p">: </span><span class="v">60000</span></div>
<div class="ln" style="top:581px">23</div>
<div class="cl" style="top:580px;left:802px"><span class="k">minEvictableIdleTimeMillis</span><span class="p">: </span><span class="v">300000</span></div>
<div class="ln" style="top:603px">24</div>
<div class="cl" style="top:602px;left:802px"><span class="k">maxEvictableIdleTimeMillis</span><span class="p">: </span><span class="v">900000</span></div>
<div class="ln" style="top:625px">25</div>
<div class="cl" style="top:624px;left:802px"><span class="k">validationQuery</span><span class="p">: </span><span class="v">SELECT 1 FROM DUAL</span></div>
<div class="ln" style="top:647px">26</div>
<div class="cl" style="top:646px;left:802px"><span class="k">testWhileIdle</span><span class="p">: </span><span class="v">true</span></div>
<div class="ln" style="top:669px">27</div>
<div class="cl" style="top:668px;left:802px"><span class="k">testOnBorrow</span><span class="p">: </span><span class="v">false</span></div>
<div class="ln" style="top:691px">28</div>
<div class="cl" style="top:690px;left:802px"><span class="k">testOnReturn</span><span class="p">: </span><span class="v">false</span></div>
<div class="ln" style="top:713px">29</div>
<div class="cl" style="top:712px;left:802px"><span class="k">break-after-acquire-failure</span><span class="p">: </span><span class="v">true</span></div>
<div class="ln" style="top:735px">30</div>
<div class="cl" style="top:734px;left:802px"><span class="k">connection-error-retry-attempts</span><span class="p">: </span><span class="v">0</span></div>
<div class="ln" style="top:757px">31</div>
<div class="ln" style="top:779px">32</div>
<div class="cl" style="top:778px;left:732px"><span class="k">servlet</span><span class="p">:</span></div>
<div class="ln" style="top:801px">33</div>
<div class="cl" style="top:800px;left:746px"><span class="k">multipart</span><span class="p">:</span></div>
<div class="ln" style="top:823px">34</div>
<div class="cl" style="top:822px;left:760px"><span class="k">max-file-size</span><span class="p">:  </span><span class="v">500MB</span></div>
<div class="ln" style="top:845px">35</div>
<div class="cl" style="top:844px;left:760px"><span class="k">max-request-size</span><span class="p">:  </span><span class="v">800MB</span></div>
<div class="ln" style="top:867px">36</div>
<div class="ln" style="top:889px">37</div>
<div class="cl" style="top:888px;left:718px"><span class="k">mybatis-plus</span><span class="p">:</span></div>
<div class="ln" style="top:911px">38</div>
<div class="cl" style="top:910px;left:732px"><span class="c"># mapper</span></div>
<div class="ln" style="top:933px">39</div>
<div class="cl" style="top:932px;left:732px"><span class="hl">mapper-package</span><span class="p">: </span><span class="v">com.rabbiter.**.mapper</span></div>
<div class="ln" style="top:955px">40</div>
<div class="cl" style="top:954px;left:732px"><span class="k">mapper-locations</span><span class="p">: </span><span class="v">classpath:mapper/*Mapper.xml</span></div>
<div class="ln" style="top:977px">41</div>
<div class="cl" style="top:976px;left:732px"><span class="k">type-aliases-package</span><span class="p">: </span><span class="v">com.rabbiter.**.domain</span></div>
<div class="ln" style="top:999px">42</div>
<div class="cl" style="top:998px;left:732px"><span class="k">configuration</span><span class="p">:</span></div>
<div class="ln" style="top:1021px">43</div>
<div class="cl" style="top:1020px;left:746px"><span class="k">map-underscore-to-camel-case</span><span class="p">: </span><span class="b">true</span></div>
<div class="ln" style="top:1043px">44</div>
<div class="ln" style="top:1065px">45</div>
<div class="cl" style="top:1064px;left:718px"><span class="k">sa-token</span><span class="p">:</span></div>
<div class="ln" style="top:1087px">46</div>
<div class="cl" style="top:1086px;left:732px"><span class="k">token-name</span><span class="p">: </span><span class="v">satoken</span></div>
<div class="ln" style="top:1109px">47</div>
<div class="cl" style="top:1108px;left:732px"><span class="k">timeout</span><span class="p">: </span><span class="n">1800</span></div>
<div class="ln" style="top:1131px">48</div>
<div class="cl" style="top:1130px;left:732px"><span class="k">activity-timeout</span><span class="p">: </span><span class="n">1800</span></div>
<div class="ln" style="top:1153px">49</div>
<div class="cl" style="top:1152px;left:732px"><span class="k">is-concurrent</span><span class="p">: </span><span class="b">true</span></div>
<div class="ln" style="top:1175px">50</div>
<div class="cl" style="top:1174px;left:732px"><span class="k">is-share</span><span class="p">: </span><span class="b">false</span></div>
<div class="ln" style="top:1197px">51</div>
<div class="cl" style="top:1196px;left:732px"><span class="k">token-style</span><span class="p">: </span><span class="v">uuid</span></div>
<div class="ln" style="top:1219px">52</div>
<div class="cl" style="top:1218px;left:732px"><span class="k">is-log</span><span class="p">: </span><span class="b">false</span></div>
<div class="ln" style="top:1241px">53</div>
<div class="ln" style="top:1263px">54</div>
<div class="cl" style="top:1262px;left:718px"><span class="k">logging</span><span class="p">:</span></div>
<div class="ln" style="top:1285px">55</div>
<div class="cl" style="top:1284px;left:732px"><span class="k">config</span><span class="p">: </span><span class="v">classpath:logback-spring.xml</span></div>

<svg class="a" style="left:788px;top:913px" width="43" height="15" viewBox="0 0 43 15"><g stroke="#86b277" stroke-width="1" fill="none">
<path d="M0 3.5H5M2.5 0V13.5L1 12.5M0 9.5L5 7.5M6 3.5H11.5V13.5H6M7 8.5H11.5"/>
<path d="M14 3.5H19M16.5 0V13.5L15 12.5M14 9.5L19 7.5M19 2.5H27M21.5 0V4M24.5 0V4M19.5 5.5H26.5V13.5H19.5ZM23 5.5V13.5M19.5 9.5H26.5"/>
<path d="M28.5 6L31 0.5M30 1.5H40.5V10.5M31 5.5H38.5V9.5H31M30.5 5.5V13.5H41V11.5"/>
</g></svg>
<div id="tabbar"></div>

<div id="tab"></div>
<svg class="a" style="left:654px;top:72px" width="20" height="20" viewBox="0 0 20 20"><path d="M2 13.5Q2 8 9 7Q14.5 6 17.3 3Q18 9 17 11.5L10 11.5Q7 12 6.5 15.5Q3 16.5 2 13.5Z" fill="#62a84a"/><polygon points="18.20,14.10 15.90,18.08 11.30,18.08 9.00,14.10 11.30,10.12 15.90,10.12" fill="#a9b5bd" stroke="#3a4a40" stroke-width=".8"/><path d="M13.6 11.3V14.2" stroke="#36414a" stroke-width="1.3"/><path d="M11.7 12.6Q11 15.8 13.6 16.3Q16.2 15.8 15.5 12.6" stroke="#36414a" stroke-width="1" fill="none"/></svg>
<div class="a" style="left:675px;top:73px;font-size:13px;line-height:18px;color:#bbbbbb">application.yml</div>
<svg class="a" style="left:768px;top:77px" width="8" height="8" viewBox="0 0 8 8"><path d="M0.5 0.5l7 7M7.5 0.5l-7 7" stroke="#76787a" stroke-width="1"/></svg>


<div class="a" style="left:2381px;top:707px;width:131px;height:26px;background:#ffffff"></div>
<svg class="a" style="left:2352px;top:700px" width="36" height="36" viewBox="0 0 36 36"><g transform="rotate(-15 18 18)"><rect x="5" y="5.5" width="26" height="25" rx="3.5" fill="#f25a24"/><path d="M26 11.5H12.5Q9.5 11.5 9.5 14.3Q9.5 17.2 12.5 17.2H23Q26.2 17.2 26.2 20.3Q26.2 23.4 23 23.4H10" stroke="#fff" stroke-width="3.8" fill="none" stroke-linecap="round"/></g></svg>
<svg class="a" style="left:2392px;top:712px" width="16" height="16" viewBox="0 0 16 16"><g fill="none" stroke="#1a6fd0" stroke-width="1.8"><path d="M1 3h14M5 1v4M11 1v4M3 6.5h10v4H3zM8 5v6M1 11h14M8 11q-2 3-7 4M8 11q2 3 7 4"/></g></svg>
<div class="a" style="left:2419px;top:715px;width:4px;height:4px;border-radius:2px;background:#1a6fd0"></div>
<svg class="a" style="left:2425px;top:716px" width="5" height="9" viewBox="0 0 5 9"><circle cx="2.5" cy="3" r="2.2" fill="#1a6fd0"/><path d="M4.5 3q0 4-3 5.5" stroke="#1a6fd0" stroke-width="1.6" fill="none"/></svg>
<svg class="a" style="left:2441px;top:711px" width="13" height="18" viewBox="0 0 13 18"><rect x="3.5" y="0.5" width="6" height="11" rx="3" fill="#1a6fd0"/><path d="M1 8q0 5.5 5.5 5.5T12 8M6.5 13.5v3M4 17h5" stroke="#1a6fd0" stroke-width="1.6" fill="none"/></svg>
<svg class="a" style="left:2465px;top:713px" width="15" height="13" viewBox="0 0 15 13"><rect x="0.8" y="0.8" width="13.4" height="11.4" rx="1.5" fill="none" stroke="#1a6fd0" stroke-width="1.6"/><g fill="#1a6fd0"><rect x="3" y="3" width="2" height="2"/><rect x="6.5" y="3" width="2" height="2"/><rect x="10" y="3" width="2" height="2"/><rect x="3" y="6" width="2" height="2"/><rect x="6.5" y="6" width="2" height="2"/><rect x="10" y="6" width="2" height="2"/><rect x="3" y="9" width="9" height="1.5"/></g></svg>
<svg class="a" style="left:2488px;top:709px" width="20" height="18" viewBox="0 0 20 18"><defs><linearGradient id="gs" x1="0" y1="0" x2="1" y2="1"><stop offset="0" stop-color="#e8505b"/><stop offset="1" stop-color="#7d7bf5"/></linearGradient></defs><path d="M1 5l4-3h2q1.5 1.5 3 0h2l4 3-2 3h-2v8H5V8H3z" fill="url(#gs)"/><circle cx="16" cy="2.5" r="2.5" fill="#f24f2c"/></svg>

<svg class="a" style="left:36px;top:126px" width="15" height="22" viewBox="0 0 15 22"><path d="M1.5 1.5V18L5.5 14L8.5 20.5L11 19.5L8 13H13Z" fill="#fff" stroke="#000" stroke-width="1.2" stroke-linejoin="miter"/></svg>
</body></html>
